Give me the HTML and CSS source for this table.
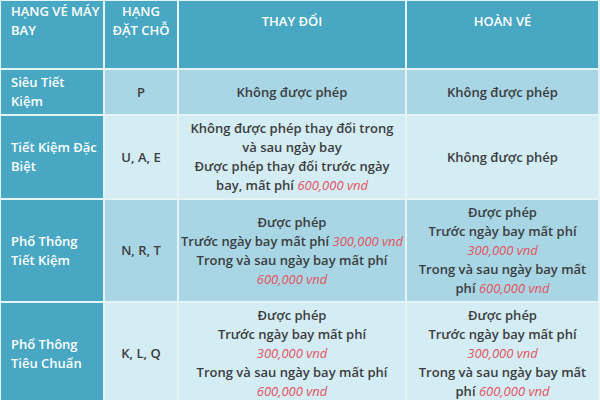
FILE: index.html
```html
<!DOCTYPE html>
<html lang="vi">
<head>
<meta charset="utf-8">
<link rel="stylesheet" href="styles.css">
</head>
<body>
<table class="fare">
  <colgroup>
    <col class="c1"><col class="c2"><col class="c3"><col class="c4"><col class="c5">
  </colgroup>
  <thead>
    <tr>
      <th class="left">HẠNG VÉ MÁY<br>BAY</th>
      <th>HẠNG<br>ĐẶT CHỖ</th>
      <th>THAY ĐỔI</th>
      <th>HOÀN VÉ</th>
      <th></th>
    </tr>
  </thead>
  <tbody>
    <tr class="odd">
      <th class="left">Siêu Tiết<br>Kiệm</th>
      <td>P</td>
      <td>Không được phép</td>
      <td>Không được phép</td>
      <td></td>
    </tr>
    <tr class="even">
      <th class="left">Tiết Kiệm Đặc<br>Biệt</th>
      <td>U, A, E</td>
      <td>Không được phép thay đổi trong<br>và sau ngày bay<br>Được phép thay đổi trước ngày<br>bay, mất phí <em>600,000 vnd</em></td>
      <td>Không được phép</td>
      <td></td>
    </tr>
    <tr class="odd">
      <th class="left">Phổ Thông<br>Tiết Kiệm</th>
      <td>N, R, T</td>
      <td>Được phép<br><span class="nw">Trước ngày bay mất phí <em>300,000 vnd</em></span><br>Trong và sau ngày bay mất phí<br><em>600,000 vnd</em></td>
      <td>Được phép<br>Trước ngày bay mất phí<br><em>300,000 vnd</em><br>Trong và sau ngày bay mất<br>phí <em>600,000 vnd</em></td>
      <td></td>
    </tr>
    <tr class="even">
      <th class="left">Phổ Thông<br>Tiêu Chuẩn</th>
      <td>K, L, Q</td>
      <td>Được phép<br>Trước ngày bay mất phí<br><em>300,000 vnd</em><br>Trong và sau ngày bay mất phí<br><em>600,000 vnd</em></td>
      <td>Được phép<br>Trước ngày bay mất phí<br><em>300,000 vnd</em><br>Trong và sau ngày bay mất<br>phí <em>600,000 vnd</em></td>
      <td></td>
    </tr>
  </tbody>
</table>
</body>
</html>
```

FILE: styles.css
```css
html, body {
  margin: 0;
  padding: 0;
  width: 600px;
  height: 400px;
  overflow: hidden;
  background: #d4ecf4;
}

.fare {
  border-collapse: collapse;
  table-layout: fixed;
  width: 700px;
  font-family: "Open Sans", "Noto Sans", sans-serif;
  font-size: 13px;
  line-height: 19px;
  color: #3b3d40;
  margin-top: -1px;
  margin-left: -1px;
}

.c1 { width: 104px; }
.c2 { width: 74px; }
.c3 { width: 228px; }
.c4 { width: 193px; }
.c5 { width: 101px; }

.fare th,
.fare td {
  border: 2px solid #e6f4f8;
  padding: 3px 2px;
  text-align: center;
  vertical-align: middle;
  font-weight: 600;
}

.fare thead th {
  background: #48a7c3;
  color: #ffffff;
  height: 38px;
  padding-top: 1px;
  padding-bottom: 28px;
}

.fare .left {
  text-align: left;
  padding-left: 10px;
  padding-right: 2px;
  white-space: nowrap;
}

.fare tbody th {
  background: #48a7c3;
  color: #ffffff;
}

.odd td { background: #a9d6e4; }
.even td { background: #d4ecf4; }

.nw { white-space: nowrap; }

.fare em {
  color: #e4525c;
  font-style: italic;
  font-weight: 400;
}
```
